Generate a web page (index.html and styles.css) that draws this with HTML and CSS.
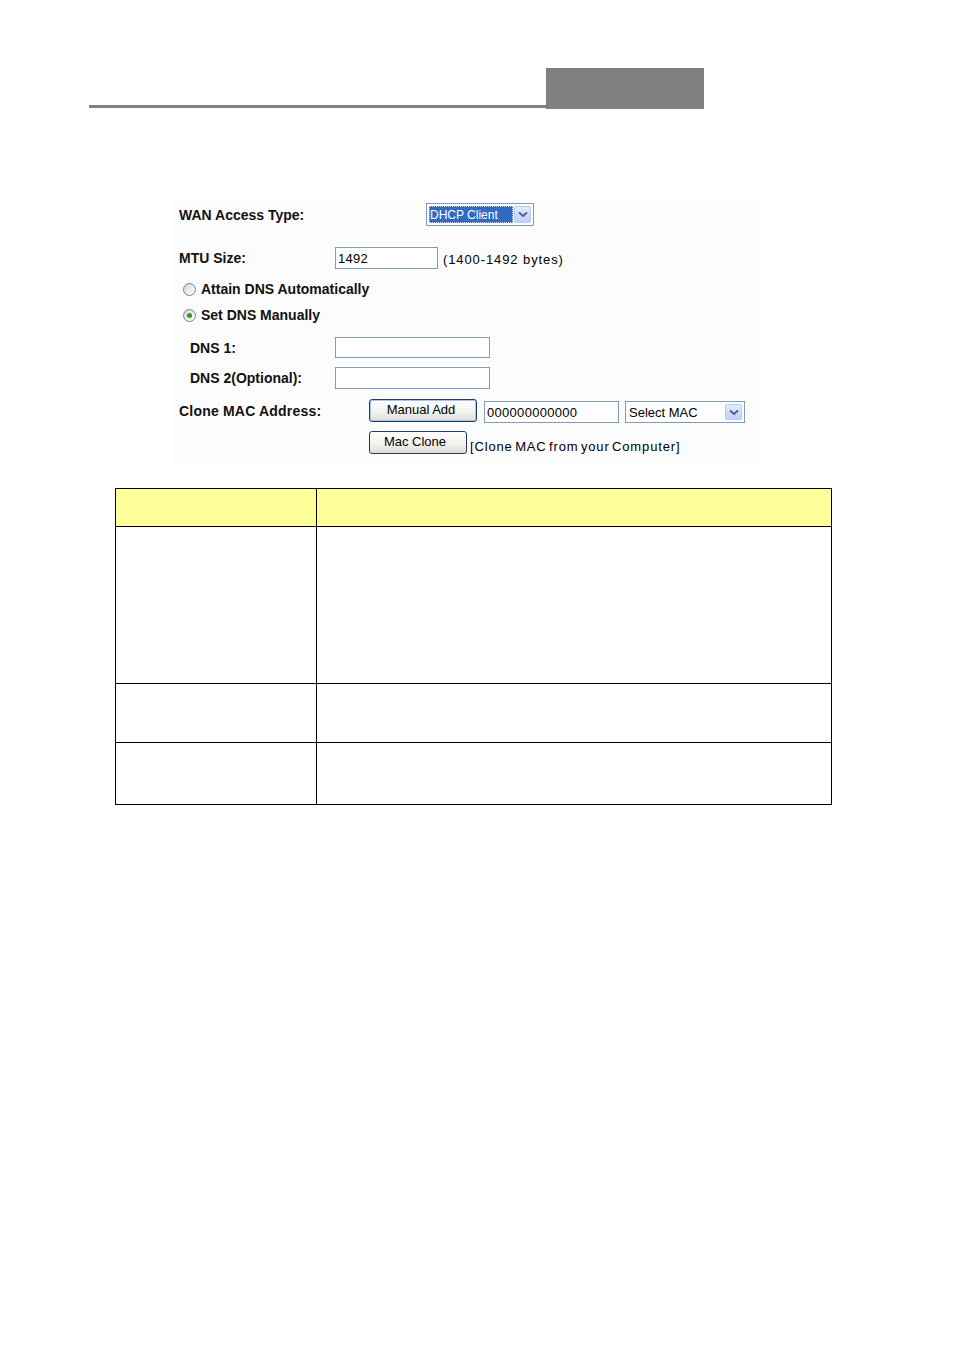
FILE: index.html
```html
<!DOCTYPE html>
<html>
<head>
<meta charset="utf-8">
<link rel="stylesheet" href="styles.css">
</head>
<body>
<div class="header">
  <div class="rule"></div>
  <div class="tab"></div>
</div>

<div class="panel">
  <div class="row r-wan">
    <div class="label w-wan">WAN Access Type:</div>
    <div class="select sel-wan">
      <div class="sel-value focused">DHCP Client</div>
      <div class="sel-btn"><svg width="10" height="7" viewBox="0 0 10 7"><path d="M1 1.5 L5 5 L9 1.5" fill="none" stroke="#4d6185" stroke-width="2"/></svg></div>
    </div>
  </div>

  <div class="row r-mtu">
    <div class="label w-156">MTU Size:</div>
    <div class="input in-mtu">1492</div>
    <div class="note">(1400-1492 bytes)</div>
  </div>

  <div class="row r-radio1">
    <span class="radio"></span>
    <span class="label">Attain DNS Automatically</span>
  </div>

  <div class="row r-radio2">
    <span class="radio checked"></span>
    <span class="label">Set DNS Manually</span>
  </div>

  <div class="row r-dns1">
    <div class="label w-156 indent">DNS 1:</div>
    <div class="input in-dns"></div>
  </div>

  <div class="row r-dns2">
    <div class="label w-156 indent">DNS 2(Optional):</div>
    <div class="input in-dns"></div>
  </div>

  <div class="row r-mac">
    <div class="label w-mac">Clone MAC Address:</div>
    <div class="button btn-add default">Manual Add</div>
    <div class="input in-mac">000000000000</div>
    <div class="select sel-mac">
      <div class="sel-value">Select MAC</div>
      <div class="sel-btn"><svg width="10" height="7" viewBox="0 0 10 7"><path d="M1 1.5 L5 5 L9 1.5" fill="none" stroke="#4d6185" stroke-width="2"/></svg></div>
    </div>
  </div>

  <div class="row r-clone">
    <div class="button btn-clone">Mac Clone</div>
    <div class="note clone-note">[Clone MAC from your Computer]</div>
  </div>
</div>

<div class="grid">
  <div class="cell head"></div>
  <div class="cell head"></div>
  <div class="cell h1"></div>
  <div class="cell h1"></div>
  <div class="cell h2"></div>
  <div class="cell h2"></div>
  <div class="cell h3"></div>
  <div class="cell h3"></div>
</div>
</body>
</html>
```

FILE: styles.css
```css
html, body {
  margin: 0;
  padding: 0;
  background: #ffffff;
}
body {
  width: 954px;
  min-height: 1350px;
  font-family: "Liberation Sans", Arial, sans-serif;
  color: #000;
}

.header {
  display: flex;
  align-items: flex-end;
  padding-top: 68px;
  padding-left: 89px;
}
.rule {
  width: 457px;
  height: 3px;
  background: #808080;
  margin-bottom: 1px;
}
.tab {
  width: 158px;
  height: 41px;
  background: #808080;
}

.panel {
  margin-top: 89px;
  margin-left: 174px;
  width: 585px;
  height: 267px;
  box-sizing: border-box;
  padding-left: 5px;
  padding-top: 5px;
  background: #fcfcfc;
}

.row {
  display: flex;
  align-items: center;
}
.r-wan { height: 23px; }
.r-mtu { height: 22px; margin-top: 21px; }
.r-radio1 { height: 20px; margin-top: 10px; padding-left: 4px; }
.r-radio2 { height: 20px; margin-top: 6px; padding-left: 4px; }
.r-dns1 { height: 21px; margin-top: 12px; }
.r-dns2 { height: 22px; margin-top: 9px; }
.r-mac { height: 24px; margin-top: 10px; }
.r-clone { height: 23px; margin-top: 8px; padding-left: 190px; }

.label {
  font-weight: bold;
  font-size: 14px;
  white-space: nowrap;
  color: #111;
}
.w-wan { width: 247px; }
.w-156 { width: 156px; }
.w-mac { width: 190px; letter-spacing: 0.2px; }
.indent { box-sizing: border-box; padding-left: 11px; }

.note {
  font-size: 13px;
  letter-spacing: 0.9px;
  margin-left: 5px;
  margin-top: 3px;
  white-space: nowrap;
}
.clone-note {
  margin-left: 3px;
  margin-top: 8px;
  letter-spacing: 0.85px;
  word-spacing: -2px;
}

.input {
  box-sizing: border-box;
  height: 100%;
  border: 1px solid #7f9db9;
  background: #fff;
  font-size: 13px;
  padding-left: 2px;
  display: flex;
  align-items: center;
  letter-spacing: 0.3px;
}
.in-mtu { width: 103px; }
.in-dns { width: 155px; }
.in-mac { width: 135px; height: 22px; margin-left: 7px; margin-top: 2px; }

.select {
  box-sizing: border-box;
  height: 100%;
  border: 1px solid #7f9db9;
  background: #fff;
  display: flex;
  align-items: stretch;
  padding: 2px;
}
.sel-wan { width: 108px; }
.sel-mac { width: 120px; height: 22px; margin-left: 6px; margin-top: 2px; }
.sel-value {
  flex: 1;
  font-size: 13px;
  display: flex;
  align-items: center;
  padding-left: 1px;
  white-space: nowrap;
}
.sel-value.focused {
  background: #316ac5;
  color: #fff;
  font-size: 12px;
  outline: 1px dotted #c8d4ef;
  outline-offset: -1px;
  margin-right: 1px;
}
.sel-btn {
  width: 17px;
  box-sizing: border-box;
  border: 1px solid #b9cbf3;
  border-radius: 2px;
  background: linear-gradient(#e3ebfe, #bcd0f9);
  display: flex;
  align-items: center;
  justify-content: center;
}

.radio {
  width: 13px;
  height: 13px;
  box-sizing: border-box;
  border-radius: 50%;
  border: 1px solid #6f829c;
  background: linear-gradient(135deg, #d6d6d0, #ffffff);
  margin-right: 5px;
  display: inline-flex;
  align-items: center;
  justify-content: center;
}
.radio.checked::after {
  content: "";
  width: 5px;
  height: 5px;
  border-radius: 50%;
  background: #2b9d2b;
}

.button {
  box-sizing: border-box;
  height: 100%;
  border: 1px solid #1f3a63;
  border-radius: 3px;
  background: linear-gradient(#ffffff, #f1f1ee 60%, #dedcd3);
  font-size: 13px;
  display: flex;
  align-items: center;
  justify-content: center;
  padding-bottom: 2px;
  white-space: nowrap;
}
.btn-add {
  width: 108px;
  height: 23px;
  margin-top: -1px;
  padding-right: 4px;
}
.btn-add.default {
  box-shadow: inset 0 0 0 1px #a9c4f3;
}
.btn-clone {
  width: 98px;
  padding-right: 6px;
}

.grid {
  margin-top: 23px;
  margin-left: 115px;
  width: 717px;
  box-sizing: border-box;
  display: grid;
  grid-template-columns: 201px 515px;
  border-left: 1px solid #000;
  border-top: 1px solid #000;
}
.cell {
  box-sizing: border-box;
  border-right: 1px solid #000;
  border-bottom: 1px solid #000;
}
.head { height: 38px; background: #ffff99; }
.h1 { height: 157px; }
.h2 { height: 59px; }
.h3 { height: 62px; }
```
